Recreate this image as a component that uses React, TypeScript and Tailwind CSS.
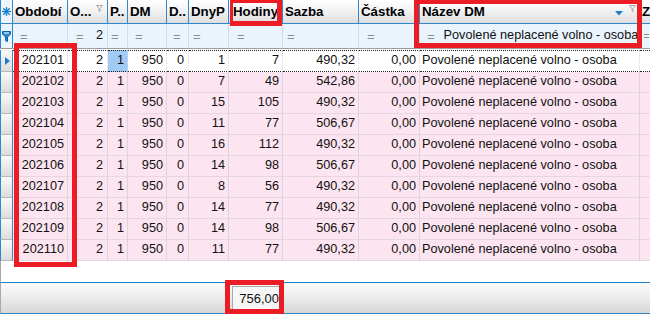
import React from "react";

const W = [
  "w-[13px]",
  "w-[55px]",
  "w-[40px]",
  "w-[20px]",
  "w-[39px]",
  "w-[22px]",
  "w-[40px]",
  "w-[54px]",
  "w-[76px]",
  "w-[61px]",
  "w-[220px]",
  "w-[10px]",
];

const rows: (string | number)[][] = [
  ["202101", 2, 1, 950, 0, 1, 7, "490,32", "0,00"],
  ["202102", 2, 1, 950, 0, 7, 49, "542,86", "0,00"],
  ["202103", 2, 1, 950, 0, 15, 105, "490,32", "0,00"],
  ["202104", 2, 1, 950, 0, 11, 77, "506,67", "0,00"],
  ["202105", 2, 1, 950, 0, 16, 112, "490,32", "0,00"],
  ["202106", 2, 1, 950, 0, 14, 98, "506,67", "0,00"],
  ["202107", 2, 1, 950, 0, 8, 56, "490,32", "0,00"],
  ["202108", 2, 1, 950, 0, 14, 77, "490,32", "0,00"],
  ["202109", 2, 1, 950, 0, 14, 98, "506,67", "0,00"],
  ["202110", 2, 1, 950, 0, 11, 77, "490,32", "0,00"],
];

const NAME = "Povolené neplacené volno - osoba";

function Asterisk() {
  return (
    <svg width="9" height="9" viewBox="0 0 9 9">
      <g stroke="#1b7fd0" strokeWidth="1.3">
        <line x1="4.5" y1="0" x2="4.5" y2="9" />
        <line x1="0" y1="4.5" x2="9" y2="4.5" />
        <line x1="1.3" y1="1.3" x2="7.7" y2="7.7" />
        <line x1="7.7" y1="1.3" x2="1.3" y2="7.7" />
      </g>
    </svg>
  );
}

function BlueFunnel() {
  return (
    <svg width="9" height="11" viewBox="0 0 9 11">
      <path
        d="M0.5 0.5 H8.5 V3 L5.5 6 V10.5 L3.5 9.5 V6 L0.5 3 Z"
        fill="#2a8ad6"
        stroke="#0f5fa5"
        strokeWidth="1"
      />
      <rect x="2" y="1.5" width="5" height="1" fill="#ffffff" />
    </svg>
  );
}

function GreyFunnel() {
  return (
    <svg width="7" height="7" viewBox="0 0 7 7">
      <path
        d="M0.5 0.5 H6.5 L4 3.5 V6.5 L3 6 V3.5 Z"
        fill="none"
        stroke="#a8a8a8"
        strokeWidth="1"
      />
    </svg>
  );
}

function Eq() {
  return <span className="text-[#8c8c8c] text-[13px] leading-none">=</span>;
}

const headerCell =
  "h-full flex items-center overflow-hidden whitespace-nowrap border-r border-[#2d88cc] bg-gradient-to-b from-[#ffffff] via-[#f1f1f1] to-[#dedede] pl-[2px] font-bold text-[13.3px] text-black";

const filterCell =
  "h-full flex items-center overflow-hidden whitespace-nowrap border-r border-[#cfdcea]";

export default function App() {
  return (
    <div className="relative w-[650px] h-[314px] overflow-hidden bg-white font-['Liberation_Sans',Arial,sans-serif] text-[#111]">
      {/* Header row */}
      <div className="flex h-[24px] border-b border-[#2d88cc]">
        <div
          className={`${W[0]} h-full flex items-center justify-center border-l border-r border-[#2d88cc] bg-[#eef5fc]`}
        >
          <Asterisk />
        </div>
        <div className={`${W[1]} ${headerCell}`}>Období</div>
        <div className={`${W[2]} ${headerCell}`}>
          <span>O...</span>
          <span className="ml-auto mr-[4px] self-start mt-[5px] flex">
            <GreyFunnel />
          </span>
        </div>
        <div className={`${W[3]} ${headerCell}`}>P..</div>
        <div className={`${W[4]} ${headerCell}`}>DM</div>
        <div className={`${W[5]} ${headerCell}`}>D..</div>
        <div className={`${W[6]} ${headerCell}`}>DnyP</div>
        <div className={`${W[7]} ${headerCell} pl-[4px]`}>Hodiny</div>
        <div className={`${W[8]} ${headerCell}`}>Sazba</div>
        <div className={`${W[9]} ${headerCell}`}>Částka</div>
        <div className={`${W[10]} ${headerCell}`}>
          <span>Název DM</span>
          <span className="ml-auto mr-[6px] mt-[4px] flex">
            <svg width="8" height="5" viewBox="0 0 8 5">
              <path d="M0 0 H8 L4 4.5 Z" fill="#1b7fd0" />
            </svg>
          </span>
          <span className="mr-[3px] self-start mt-[5px] flex">
            <GreyFunnel />
          </span>
        </div>
        <div className={`${W[11]} ${headerCell} border-r-0`}>Z</div>
      </div>

      {/* Filter row */}
      <div className="flex h-[24px] bg-[#eaf4fd] text-[12.7px]">
        <div
          className={`${W[0]} h-full flex items-center justify-center border-l border-r border-[#2d88cc]`}
        >
          <BlueFunnel />
        </div>
        <div className={`${W[1]} ${filterCell} pl-[7px]`}>
          <Eq />
        </div>
        <div className={`${W[2]} ${filterCell} pl-[8px] pr-[4px]`}>
          <Eq />
          <span className="ml-auto">2</span>
        </div>
        <div className={`${W[3]} ${filterCell} pl-[3px]`}>
          <Eq />
        </div>
        <div className={`${W[4]} ${filterCell} pl-[7px]`}>
          <Eq />
        </div>
        <div className={`${W[5]} ${filterCell} pl-[6px]`}>
          <Eq />
        </div>
        <div className={`${W[6]} ${filterCell} pl-[4px]`}>
          <Eq />
        </div>
        <div className={`${W[7]} ${filterCell} pl-[8px]`}>
          <Eq />
        </div>
        <div className={`${W[8]} ${filterCell} pl-[4px]`}>
          <Eq />
        </div>
        <div className={`${W[9]} ${filterCell} pl-[8px]`}>
          <Eq />
        </div>
        <div className={`${W[10]} ${filterCell} pl-[7px] gap-[9px]`}>
          <Eq />
          <span>{NAME}</span>
        </div>
        <div className={`${W[11]} ${filterCell} border-r-0 pl-[4px]`}>
          <span className="block w-[5px] h-[4px] border-t border-b border-[#8c8c8c]" />
        </div>
      </div>

      {/* divider */}
      <div className="h-[2px] border-t border-[#9d9d9d] bg-white" />

      {/* Data rows */}
      {rows.map((r, i) => {
        const first = i === 0;
        const rowCls = first ? "h-[22px] bg-white" : "h-[21px] bg-[#fce5f0]";
        const cellBorder = first
          ? "border-t border-b border-dotted border-t-[#222] border-b-[#222]"
          : "border-b border-[#e6d6de]";
        const cell = `h-full flex items-center justify-end pr-[3px] overflow-hidden whitespace-nowrap border-r border-r-[#dcd4d8] ${cellBorder}`;
        return (
          <div key={i} className={`flex ${rowCls} text-[12.7px]`}>
            <div
              className={`${W[0]} h-full flex items-center border-l border-r border-[#2d88cc] bg-gradient-to-b from-[#fafafa] to-[#dcdcdc] border-b border-b-[#b8b8b8] pl-[4px]`}
            >
              {first && (
                <svg width="5" height="8" viewBox="0 0 5 8">
                  <path d="M0 0 L5 4 L0 8 Z" fill="#1b7fd0" />
                </svg>
              )}
            </div>
            <div className={`${W[1]} ${cell}`}>{r[0]}</div>
            <div className={`${W[2]} ${cell} pr-[4px]`}>{r[1]}</div>
            <div className={`${W[3]} ${cell} ${first ? "bg-[#9fcbf6]" : ""}`}>
              {r[2]}
            </div>
            <div className={`${W[4]} ${cell}`}>{r[3]}</div>
            <div className={`${W[5]} ${cell} pr-[4px]`}>{r[4]}</div>
            <div className={`${W[6]} ${cell}`}>{r[5]}</div>
            <div className={`${W[7]} ${cell}`}>{r[6]}</div>
            <div className={`${W[8]} ${cell}`}>{r[7]}</div>
            <div className={`${W[9]} ${cell}`}>{r[8]}</div>
            <div className={`${W[10]} ${cell} justify-start pl-[2px]`}>
              {NAME}
            </div>
            <div className={`${W[11]} ${cell} border-r-0`} />
          </div>
        );
      })}

      {/* empty area */}
      <div className="h-[21px] border-l border-[#a8a8a8] bg-white" />

      {/* Footer summary bar */}
      <div className="h-[32px] flex border-t border-[#1f80c8] border-b border-b-[#2a86c8] border-l border-l-[#a8a8a8] bg-gradient-to-b from-[#fbfbfb] via-[#ececec] to-[#d6d6d6]">
        <div className="w-[231px]" />
        <div className="mt-[3px] h-[24px] w-[49px] flex items-center justify-end pr-[2px] border-l border-t border-[#a9a9a9] bg-[#f6f6f6] text-[13px] text-[#111]">
          756,00
        </div>
      </div>

      {/* Red annotation boxes */}
      <div className="absolute left-[14px] top-[43px] w-[63px] h-[224px] border-[5px] border-[#ec1c24]" />
      <div className="absolute left-[230px] top-[-1px] w-[52px] h-[27px] border-t-[4px] border-r-[5px] border-b-[5px] border-l-[3px] border-[#ec1c24]" />
      <div className="absolute left-[414px] top-[-1px] w-[228px] h-[49px] border-[5px] border-[#ec1c24]" />
      <div className="absolute left-[225px] top-[280px] w-[59px] h-[34px] border-[5px] border-[#ec1c24]" />
    </div>
  );
}
